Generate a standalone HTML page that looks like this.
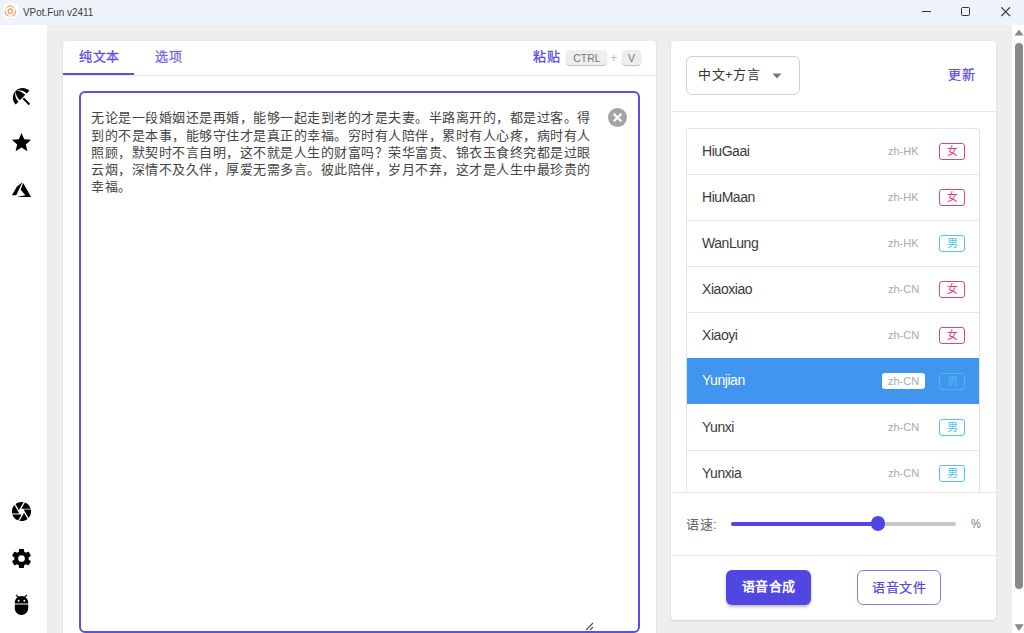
<!DOCTYPE html>
<html lang="zh-CN">
<head>
<meta charset="utf-8">
<style>
*{box-sizing:border-box;margin:0;padding:0}
html,body{width:1024px;height:633px;overflow:hidden}
body{position:relative;background:#eeeeee;font-family:"Liberation Sans",sans-serif;color:#333}
.abs{position:absolute}
#title{left:0;top:0;width:1024px;height:25px;background:#eef2f9}
#title .txt{left:23px;top:4.6px;font-size:11px;color:#3c3c3c;line-height:14px;white-space:nowrap;transform:scaleX(.9);transform-origin:0 0}
#side{left:0;top:25px;width:47px;height:608px;background:#fff}
.ico{position:absolute;width:23px;height:23px}
.card{position:absolute;background:#fff;border-radius:4px;box-shadow:0 1px 2px rgba(0,0,0,.12),0 0 1px rgba(0,0,0,.08)}
#lcard{left:63px;top:41px;width:593px;height:620px}
#rcard{left:671px;top:41px;width:325px;height:578.5px}
.tabtxt{position:absolute;font-size:13px;letter-spacing:.5px;line-height:16px;color:#5b50e6;white-space:nowrap}
#ta{left:16px;top:50px;width:561px;height:542px;border:2px solid #5a4fe6;border-radius:6px}
#tatext{left:10px;top:16.3px;font-size:13px;letter-spacing:.5px;line-height:17.25px;color:#444;white-space:pre}
.kbd{position:absolute;background:#eeeeee;border-radius:4px;box-shadow:0 1px 1px rgba(0,0,0,.25);color:#777;font-size:10.5px;line-height:16.5px;text-align:center;height:15px}
#scroll{left:1012px;top:25px;width:12px;height:608px;background:#fff}
#list{left:15px;top:87px;width:294px;height:364px;overflow:hidden;border:1px solid #e3e3e3;border-bottom:none;border-radius:4px 4px 0 0}
.row{position:absolute;left:0;width:293px;height:46px;border-bottom:1px solid #e6e6e6}
.nm{position:absolute;left:15px;top:13.8px;font-size:14px;letter-spacing:-.45px;line-height:16px;color:#3a3a3a;white-space:nowrap}
.loc{position:absolute;left:201px;top:15px;font-size:11px;line-height:14px;color:#aaa;white-space:nowrap}
.bd{position:absolute;left:252px;top:14px;width:26px;height:17px;border:1.3px solid;border-radius:3px;font-size:11px;line-height:15px;text-align:center;padding-left:1px}
.f{color:#e04479;border-color:#e04479}
.m{color:#4cc6ee;border-color:#4cc6ee}
.btn{position:absolute;height:35px;border-radius:6px;font-size:13.5px;line-height:33px;text-align:center;white-space:nowrap}
</style>
</head>
<body>
<div id="title" class="abs">
  <svg class="abs" style="left:0;top:0" width="22" height="22" viewBox="0 0 22 22">
    <rect x="3.7" y="3.5" width="14.2" height="14.5" rx="3.5" fill="#fff"/>
    <g fill="none" stroke="#eea262" stroke-width="1.2" stroke-linecap="round">
      <path d="M7.06 7.22A5.2 5.2 0 0 1 13.74 7.22"/>
      <path d="M8.37 15.99A5.2 5.2 0 0 1 5.2 11.2"/>
      <path d="M15.6 11.2A5.2 5.2 0 0 1 12.43 15.99"/>
      <circle cx="10.4" cy="11.2" r="2.2" stroke-width="1.3"/>
    </g>
    <g fill="#f3c096"><circle cx="5.5" cy="9.4" r=".6"/><circle cx="15.3" cy="9.4" r=".6"/><circle cx="10.4" cy="16.6" r=".6"/></g>
  </svg>
  <div class="abs txt">VPot.Fun v2411</div>
  <svg class="abs" style="left:922px;top:11px" width="10" height="2"><rect width="9" height="1" fill="#333"/></svg>
  <svg class="abs" style="left:961px;top:7px" width="10" height="10"><rect x="0.5" y="0.5" width="8" height="8" rx="1" fill="none" stroke="#333" stroke-width="1"/></svg>
  <svg class="abs" style="left:1001px;top:7px" width="10" height="10"><path d="M0.3 0.3L9 9M9 0.3L0.3 9" stroke="#333" stroke-width="1.1"/></svg>
</div>

<div id="side" class="abs">
  <svg class="ico" style="left:10px;top:60px" viewBox="0 0 24 24"><path d="M13.127 14.56l1.43-1.43 6.44 6.443L19.57 21zm4.293-5.73l2.86-2.86c-3.95-3.95-10.35-3.96-14.3-.02 3.93-1.3 8.310-.25 11.44 2.88zM5.95 5.98c-3.94 3.95-3.93 10.35.02 14.3l2.86-2.86C5.7 14.29 4.65 9.91 5.95 5.98zm.02-.02l-.01.01c-.38 3.01 1.17 6.88 4.3 10.02l5.73-5.73c-3.13-3.13-7.01-4.68-10.02-4.3z"/></svg>
  <svg class="ico" style="left:10px;top:106px" viewBox="0 0 24 24"><path d="M12 17.27L18.18 21l-1.64-7.03L22 9.24l-7.19-.61L12 2 9.19 8.63 2 9.24l5.46 4.73L5.82 21z"/></svg>
  <svg class="ico" style="left:10px;top:153px" viewBox="0 0 24 24"><path d="M13.05,4.24L6.56,18.05L2,18L7.09,9.24L13.05,4.24M13.75,5.33L22,19.76H6.74L16.04,18.1L11.17,12.31L13.75,5.33Z"/></svg>
  <svg class="ico" style="left:10px;top:475px" viewBox="0 0 24 24"><path d="M13.73,15L9.83,21.76C10.53,21.91 11.25,22 12,22C14.4,22 16.6,21.15 18.32,19.75L14.66,13.4M2.46,15C3.38,17.92 5.610,20.26 8.45,21.34L12.12,15M8.54,12L4.64,5.25C3,7 2,9.39 2,12C2,12.68 2.07,13.35 2.2,14H9.69M21.8,10H14.31L14.6,10.5L19.36,18.75C21,16.97 22,14.6 22,12C22,11.31 21.93,10.64 21.8,10M21.54,9C20.62,6.07 18.39,3.74 15.55,2.66L11.88,9M9.4,10.5L14.17,2.24C13.47,2.09 12.75,2 12,2C9.6,2 7.4,2.84 5.68,4.25L9.34,10.6L9.4,10.5Z"/></svg>
  <svg class="ico" style="left:10px;top:522px" viewBox="0 0 24 24"><path d="M12,15.5A3.5,3.5 0 0,1 8.5,12A3.5,3.5 0 0,1 12,8.5A3.5,3.5 0 0,1 15.5,12A3.5,3.5 0 0,1 12,15.5M19.43,12.97C19.470,12.65 19.5,12.33 19.5,12C19.5,11.67 19.47,11.34 19.43,11L21.54,9.37C21.73,9.22 21.78,8.95 21.66,8.73L19.66,5.27C19.54,5.05 19.27,4.96 19.05,5.05L16.56,6.05C16.04,5.66 15.5,5.32 14.87,5.07L14.5,2.42C14.46,2.18 14.25,2 14,2H10C9.75,2 9.54,2.18 9.5,2.42L9.13,5.07C8.5,5.32 7.96,5.66 7.44,6.05L4.95,5.05C4.73,4.96 4.46,5.05 4.34,5.27L2.34,8.73C2.21,8.95 2.27,9.22 2.46,9.37L4.57,11C4.53,11.34 4.5,11.67 4.5,12C4.5,12.33 4.53,12.65 4.57,12.97L2.46,14.63C2.27,14.78 2.21,15.05 2.34,15.27L4.34,18.73C4.46,18.95 4.73,19.03 4.95,18.95L7.44,17.94C7.96,18.34 8.5,18.68 9.13,18.93L9.5,21.58C9.54,21.820 9.75,22 10,22H14C14.25,22 14.46,21.82 14.5,21.58L14.87,18.93C15.5,18.67 16.04,18.34 16.56,17.94L19.05,18.95C19.27,19.03 19.54,18.95 19.66,18.73L21.66,15.27C21.78,15.05 21.73,14.78 21.54,14.63L19.43,12.97Z"/></svg>
  <svg class="ico" style="left:10px;top:568px" viewBox="0 0 24 24"><path d="M15,9A1,1 0 0,1 14,8A1,1 0 0,1 15,7A1,1 0 0,1 16,8A1,1 0 0,1 15,9M9,9A1,1 0 0,1 8,8A1,1 0 0,1 9,7A1,1 0 0,1 10,8A1,1 0 0,1 9,9M16.12,4.37L18.22,2.27L17.4,1.44L15.09,3.75C14.16,3.28 13.11,3 12,3C10.88,3 9.84,3.28 8.91,3.75L6.6,1.44L5.78,2.27L7.88,4.37C6.14,5.64 5,7.68 5,10V11H19V10C19,7.68 17.86,5.64 16.12,4.37M5,16C5,19.86 8.13,23 12,23A7,7 0 0,0 19,16V12H5V16Z"/></svg>
</div>

<div id="lcard" class="card">
  <div class="abs" style="left:0;top:34px;width:593px;height:1px;background:#eaeaea"></div>
  <div class="abs" style="left:0;top:32px;width:71px;height:2px;background:#5a4fe6"></div>
  <div class="tabtxt" style="left:16px;top:8.4px;-webkit-text-stroke:.3px #5b50e6">纯文本</div>
  <div class="tabtxt" style="left:92px;top:8.4px;opacity:.85;-webkit-text-stroke:.3px #5b50e6">选项</div>
  <div class="tabtxt" style="left:470px;top:8.4px;-webkit-text-stroke:.3px #5b50e6">粘贴</div>
  <div class="kbd" style="left:503px;top:9px;width:41px;padding-left:1px">CTRL</div>
  <div class="abs" style="left:547px;top:8px;font-size:13px;line-height:17px;color:#bbb">+</div>
  <div class="kbd" style="left:559px;top:9px;width:19px">V</div>
  <div id="ta" class="abs">
    <div id="tatext" class="abs">无论是一段婚姻还是再婚，能够一起走到老的才是夫妻。半路离开的，都是过客。得
到的不是本事，能够守住才是真正的幸福。穷时有人陪伴，累时有人心疼，病时有人
照顾，默契时不言自明，这不就是人生的财富吗？荣华富贵、锦衣玉食终究都是过眼
云烟，深情不及久伴，厚爱无需多言。彼此陪伴，岁月不弃，这才是人生中最珍贵的
幸福。</div>
    <svg class="abs" style="left:527px;top:15px" width="19" height="19" viewBox="0 0 19 19"><circle cx="9.5" cy="9.5" r="9.5" fill="#a3a3a3"/><path d="M5.7 5.7L13.3 13.3M13.3 5.7L5.7 13.3" stroke="#fff" stroke-width="2.3"/></svg>
    <svg class="abs" style="left:504px;top:529px" width="10" height="9" viewBox="0 0 10 9"><path d="M1 8L8 1M5 8L8 5" stroke="#555" stroke-width="1.2"/></svg>
  </div>
</div>

<div id="rcard" class="card">
  <div class="abs" style="left:15px;top:15px;width:114px;height:39px;border:1px solid #cfcfcf;border-radius:6px"></div>
  <div class="tabtxt" style="left:27px;top:26.2px;color:#333">中文+方言</div>
  <svg class="abs" style="left:101px;top:32px" width="10" height="6"><path d="M0.5 0.5H9.5L5 5.5Z" fill="#777"/></svg>
  <div class="tabtxt" style="left:277px;top:26.4px;-webkit-text-stroke:.25px #5b50e6">更新</div>
  <div class="abs" style="left:0;top:70px;width:325px;height:1px;background:#e6e6e6"></div>
  <div id="list" class="abs">
    <div class="row" style="top:0"><div class="nm">HiuGaai</div><div class="loc">zh-HK</div><div class="bd f">女</div></div>
    <div class="row" style="top:46px"><div class="nm">HiuMaan</div><div class="loc">zh-HK</div><div class="bd f">女</div></div>
    <div class="row" style="top:92px"><div class="nm">WanLung</div><div class="loc">zh-HK</div><div class="bd m">男</div></div>
    <div class="row" style="top:138px"><div class="nm">Xiaoxiao</div><div class="loc">zh-CN</div><div class="bd f">女</div></div>
    <div class="row" style="top:184px"><div class="nm">Xiaoyi</div><div class="loc">zh-CN</div><div class="bd f">女</div></div>
    <div class="row" style="top:229px;background:#4096ee;border-bottom-color:#4096ee"><div class="nm" style="color:#fff">Yunjian</div><div class="loc" style="background:#fff;border-radius:3px;padding:0 6px;left:195px;top:15px;line-height:16px">zh-CN</div><div class="bd m" style="opacity:.72;top:14.5px">男</div></div>
    <div class="row" style="top:276px"><div class="nm">Yunxi</div><div class="loc">zh-CN</div><div class="bd m">男</div></div>
    <div class="row" style="top:322px"><div class="nm">Yunxia</div><div class="loc">zh-CN</div><div class="bd m">男</div></div>
  </div>
  <div class="abs" style="left:0;top:451px;width:325px;height:1px;background:#e6e6e6"></div>
  <div class="tabtxt" style="left:15px;top:476px;color:#666">语速:</div>
  <div class="abs" style="left:60px;top:481px;width:225px;height:4px;border-radius:2px;background:#c8c8c8"></div>
  <div class="abs" style="left:60px;top:481px;width:147px;height:4px;border-radius:2px;background:#4f46e5"></div>
  <div class="abs" style="left:199.8px;top:475px;width:14.5px;height:14.5px;border-radius:50%;background:#4f46e5"></div>
  <div class="abs" style="left:300px;top:476px;font-size:13px;line-height:14px;color:#777;transform:scaleX(.85);transform-origin:0 0">%</div>
  <div class="abs" style="left:0;top:514px;width:325px;height:1px;background:#e6e6e6"></div>
  <div class="btn" style="left:55px;top:529.3px;width:85px;background:#5046e2;color:#fff;font-weight:700;letter-spacing:.5px;font-size:13px;box-shadow:0 2px 3px rgba(0,0,0,.25)">语音合成</div>
  <div class="btn" style="left:186px;top:529px;width:84px;border:1.5px solid #837cf0;color:#5046e2;-webkit-text-stroke:.2px #5046e2;letter-spacing:.5px;font-size:13px">语音文件</div>
</div>

<div id="scroll" class="abs">
  <svg class="abs" style="left:2px;top:4px" width="10" height="7"><path d="M0.5 6.5L5 0.5L9.5 6.5Z" fill="#8a8a8a"/></svg>
  <div class="abs" style="left:3px;top:17.5px;width:8px;height:546.5px;border-radius:4px;background:#8a8a8a"></div>
  <svg class="abs" style="left:2px;top:599px" width="10" height="8"><path d="M0.5 0.3L9.7 0.3L5.1 7Z" fill="#8a8a8a"/></svg>
</div>
</body>
</html>
